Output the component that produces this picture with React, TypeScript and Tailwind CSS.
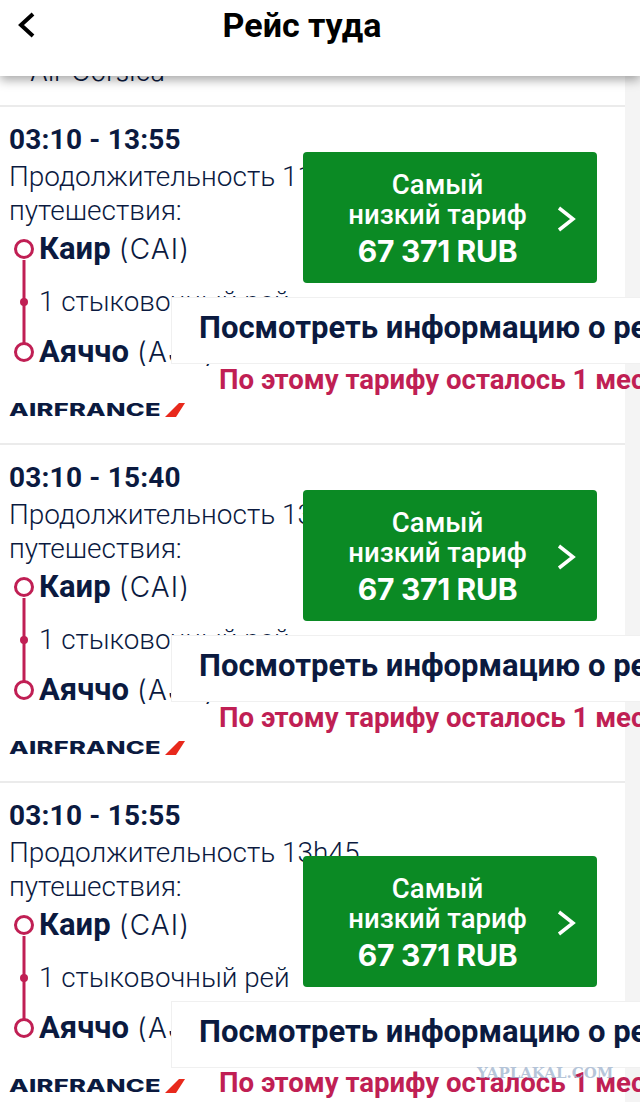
import type { FC } from "react";

type Flight = { arrival: string; duration: string; buttonTop: string; panelTop: string; noticeTop: string };

const flights: Flight[] = [
  { arrival: "13:55", duration: "11h45", buttonTop: "top-[45px]", panelTop: "top-[190px]", noticeTop: "top-[258px]" },
  { arrival: "15:40", duration: "13h30", buttonTop: "top-[45px]", panelTop: "top-[190px]", noticeTop: "top-[258px]" },
  { arrival: "15:55", duration: "13h45", buttonTop: "top-[73px]", panelTop: "top-[218px]", noticeTop: "top-[285px]" },
];

const Route: FC = () => (
  <div className="mt-[8px] flex">
    {/* Route line */}
    <div className="relative w-[31px] shrink-0">
      <svg width="31" height="130" viewBox="0 0 31 130" className="absolute left-0 top-0">
        <line x1="15" y1="24" x2="15" y2="110" stroke="#c01f54" strokeWidth="3" />
        <circle cx="15" cy="13" r="8.5" fill="#fff" stroke="#c01f54" strokeWidth="3" />
        <circle cx="15" cy="66" r="4" fill="#c01f54" />
        <circle cx="15" cy="116" r="8.5" fill="#fff" stroke="#c01f54" strokeWidth="3" />
      </svg>
    </div>
    <div className="-ml-px -mt-[2px] flex flex-col text-[#0b1a3f]">
      <div className="h-[54px] text-[31px] leading-[26px] whitespace-nowrap">
        <span className="font-bold font-['Roboto',sans-serif]">Каир</span>{" "}
        <span className="text-[28px] font-['Inter',sans-serif] font-light tracking-[1.2px]">(CAI)</span>
      </div>
      <div className="h-[49px] text-[27.8px] leading-[28px] whitespace-nowrap font-['Roboto',sans-serif] font-light">
        1 стыковочный рей
      </div>
      <div className="text-[31px] leading-[26px] whitespace-nowrap">
        <span className="font-bold font-['Roboto',sans-serif]">Аяччо</span>{" "}
        <span className="text-[28px] font-['Inter',sans-serif] font-light tracking-[1.2px]">(AJA)</span>
      </div>
    </div>
  </div>
);

const AirFrance: FC = () => (
  <div className="mt-[35px] flex items-center gap-[4px]">
    <span className="w-[151px] origin-left scale-x-[1.5] font-['Inter',sans-serif] text-[17px] font-extrabold leading-[20px] tracking-[0.2px] text-[#0b1a3f]">
      AIRFRANCE
    </span>
    <svg width="22" height="16" viewBox="0 0 22 16">
      <path d="M1 15 L15 1 H21 L12 15 Z" fill="#e8291c" />
    </svg>
  </div>
);

const FlightCard: FC<{ flight: Flight }> = ({ flight }) => (
  <div className="relative h-[338px] border-t-2 border-[#ebebeb] pl-[9px] pt-[18px]">
    <div className="font-['Roboto',sans-serif] text-[28px] font-bold leading-[30px] tracking-[0.2px] text-[#0b1a3f]">
      03:10 - {flight.arrival}
    </div>
    <div className="mt-[5px] w-[320px] font-['Roboto',sans-serif] text-[28px] font-light leading-[34px] text-[#0b1a3f]">
      <div className="whitespace-nowrap">Продолжительность {flight.duration}</div>
      <div>путешествия:</div>
    </div>
    <Route />
    <AirFrance />

    {/* Fare button */}
    <div
      className={`absolute left-[303px] flex h-[131px] w-[294px] items-center rounded-[4px] bg-[#0b8a24] text-white ${flight.buttonTop}`}
    >
      <div className="flex-1 pl-[16px] text-center font-['Roboto',sans-serif] text-[27.5px] font-medium leading-[30px]">
        <div>Самый</div>
        <div>низкий тариф</div>
        <div className="mt-[6px] font-['Inter',sans-serif] text-[30px] font-bold tracking-[-0.3px]">67 371 RUB</div>
      </div>
      <svg width="22" height="28" viewBox="0 0 22 28" className="mr-[19px] mt-[2px]">
        <path d="M3 3 L17 14 L3 25" fill="none" stroke="#fff" strokeWidth="3.5" />
      </svg>
    </div>

    {/* Flight details panel */}
    <div
      className={`absolute left-[171px] flex h-[67px] w-[500px] items-center border border-[#f0f0f0] bg-white pb-[4px] pl-[27px] font-['Roboto',sans-serif] text-[31px] font-bold whitespace-nowrap text-[#0b1a3f] ${flight.panelTop}`}
    >
      Посмотреть информацию о рейсе
    </div>

    <div
      className={`absolute left-[219px] font-['Roboto',sans-serif] text-[27.6px] leading-[30px] font-bold whitespace-nowrap text-[#c01f54] ${flight.noticeTop}`}
    >
      По этому тарифу осталось 1 место
    </div>
  </div>
);

const App: FC = () => {
  return (
    <div className="relative h-[1102px] w-[640px] overflow-hidden bg-white">
      {/* Header */}
      <header className="relative z-10 flex h-[76px] items-start justify-center bg-white pr-[36px] shadow-[0_4px_10px_rgba(0,0,0,0.35)]">
        <svg width="20" height="28" viewBox="0 0 20 28" className="absolute left-[17px] top-[11px]">
          <path d="M16 3 L4 14 L16 25" fill="none" stroke="#000" strokeWidth="4" />
        </svg>
        <h1 className="pt-[5px] font-['Roboto',sans-serif] text-[34px] leading-[40px] font-bold text-black">Рейс туда</h1>
      </header>

      <div className="flex">
        <main className="min-w-0 flex-1">
          <div className="h-[29px] overflow-hidden">
            <div className="-mt-[20px] pl-[30px] font-['Inter',sans-serif] text-[26.5px] leading-[30px] font-light text-[#0b1a3f]">
              Air Corsica
            </div>
          </div>
          {flights.map((flight) => (
            <FlightCard key={flight.arrival} flight={flight} />
          ))}
        </main>
        <div className="h-[1026px] w-[15px] shrink-0 bg-[#f4f4f4]" />
      </div>

      {/* Site watermark */}
      <div className="absolute left-[477px] top-[1062px] font-['DejaVu_Serif',serif] text-[15px] font-bold text-[#a9bbd3]/85">
        YAPLAKAL.COM
      </div>
    </div>
  );
};

export default App;
